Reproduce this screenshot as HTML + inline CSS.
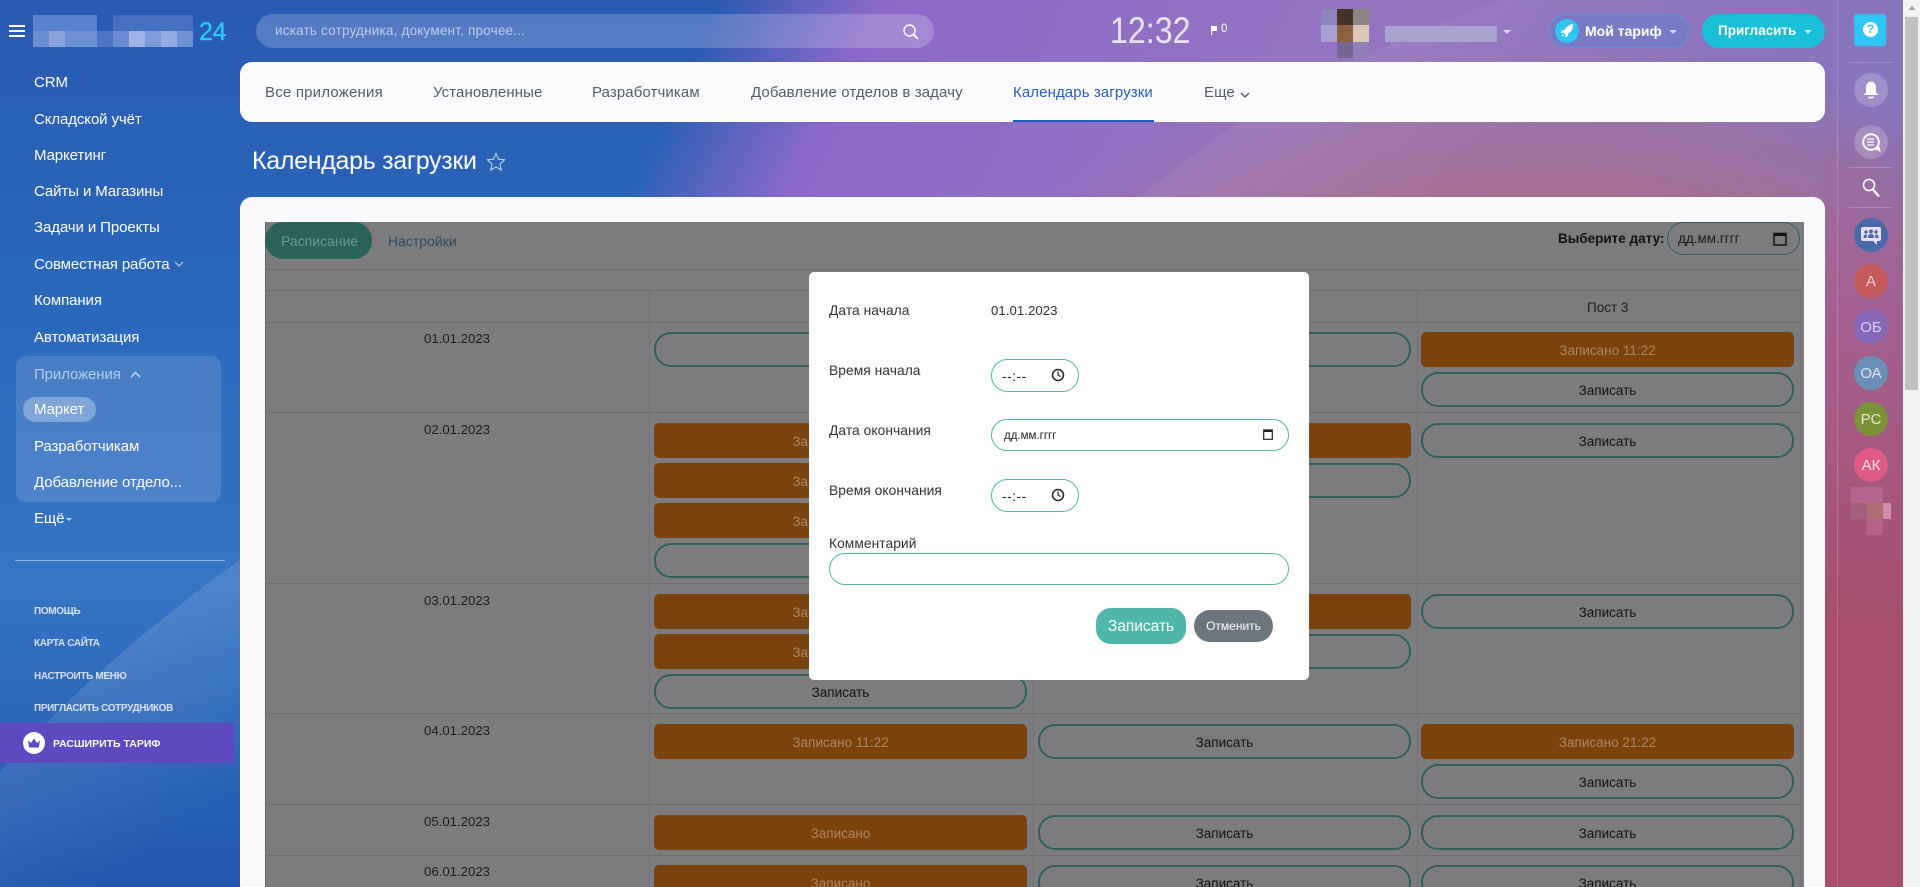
<!DOCTYPE html>
<html lang="ru"><head><meta charset="utf-8"><title>Календарь загрузки</title>
<style>
*{box-sizing:border-box}
html,body{margin:0;padding:0;width:1920px;height:887px;overflow:hidden;font-family:"Liberation Sans","DejaVu Sans",sans-serif}
#root{position:relative;width:1920px;height:887px;overflow:hidden}
#bg{position:absolute;left:0;top:0;width:1903px;height:887px;
background:
radial-gradient(ellipse 620px 360px at 1560px 400px,rgba(172,110,136,1) 45%,rgba(172,110,136,0) 100%),
linear-gradient(115deg,rgba(140,105,200,0) 31%,rgba(140,105,200,1) 38%,rgba(150,118,190,1) 62%,rgba(122,116,186,1) 100%),
linear-gradient(180deg,#2a5ab3 0,#2a66ba 30%,#3774c4 66%,#2b64b8 84%,#2357ad 100%)}
#rail{position:absolute;left:1825px;top:0;width:78px;height:887px;background:linear-gradient(180deg,rgba(166,78,108,0) 120px,rgba(160,92,150,.75) 300px,rgba(166,78,108,1) 620px)}
.a,.t,.o,.b,.c{position:absolute}
.t{white-space:nowrap;height:20px;line-height:20px}
.s{color:#fff;font-size:15px;left:34px;letter-spacing:-.1px}
.sm{color:rgba(255,255,255,.78);font-size:10px;font-weight:bold;left:34px;letter-spacing:-.35px}
.tab{color:#535c69;font-size:15px;top:83px;letter-spacing:.1px}
.o{background:#7a430e;border-radius:5px;color:#ab8868;height:35px;width:373px;font-size:13.5px;text-align:center;line-height:37.5px}
.b{border:2px solid #2f5f57;border-radius:17px;color:#111;height:35px;width:373px;font-size:13.5px;text-align:center;line-height:34px}
.x1{left:654px}.x2{left:1038px}.x3{left:1421px}
.hl{position:absolute;left:265px;width:1535px;height:1px;background:#6c6e70}
.vl{position:absolute;top:290px;width:1px;height:597px;background:#6f7174}
.d{color:#1c1d1f;font-size:13.2px;left:424px;width:66px;text-align:center}
.c{border-radius:50%;width:34px;height:34px;left:1854px;color:#fff;font-size:15px;text-align:center;line-height:36px}
.dv{position:absolute;left:1849px;width:43px;height:1px;background:rgba(255,255,255,.2)}
.f{border:1px solid #55b5a8;border-radius:17px;position:absolute;background:#fff}
.l{color:#333;font-size:13.8px;left:829px;letter-spacing:.05px}
.car{position:absolute;width:0;height:0;border-left:4px solid transparent;border-right:4px solid transparent;border-top:4px solid rgba(255,255,255,.7)}
</style></head><body>
<div id="root">
<div id="bg"></div>
<div id="rail"></div>
<svg class="a" style="left:0;top:0" width="1903" height="887">
<defs>
<linearGradient id="g1" gradientUnits="userSpaceOnUse" x1="130" y1="650" x2="230" y2="800"><stop offset="0" stop-color="#fff" stop-opacity=".11"/><stop offset="1" stop-color="#fff" stop-opacity="0"/></linearGradient>
<linearGradient id="g2" gradientUnits="userSpaceOnUse" x1="1280" y1="90" x2="1420" y2="220"><stop offset="0" stop-color="#fff" stop-opacity=".06"/><stop offset="1" stop-color="#fff" stop-opacity="0"/></linearGradient>
</defs>
<path d="M0 772 Q100 660 240 560 L240 887 L0 887Z" fill="url(#g1)"/>
<path d="M1140 197 Q1190 155 1240 122 Q1340 60 1500 0 L1903 0 L1903 197Z" fill="url(#g2)"/>
</svg>

<!-- header -->
<div class="a" style="left:9px;top:25px;width:16px;height:2px;background:#fff"></div>
<div class="a" style="left:9px;top:30px;width:16px;height:2px;background:#fff"></div>
<div class="a" style="left:9px;top:35px;width:16px;height:2px;background:#fff"></div>
<div class="a" style="left:33px;top:15px;width:64px;height:16px;background:#5a82cc"></div>
<div class="a" style="left:113px;top:15px;width:80px;height:16px;background:#4570c2"></div>
<div class="a" style="left:33px;top:31px;width:160px;height:16px;background:linear-gradient(90deg,#6a8fd2 0 10%,#8aa3da 10% 20%,#6e90d4 20% 40%,#4a75c4 40% 50%,#6a8cd2 50% 60%,#9fb4e2 60% 70%,#7d9bd8 70% 80%,#93abe0 80% 90%,#6f92d4 90%)"></div>
<div class="t" style="left:199px;top:17px;height:30px;line-height:30px;font-size:25px;color:#2fc6f6;letter-spacing:-.3px;-webkit-text-stroke:.4px #2fc6f6">24</div>
<div class="a" style="left:256px;top:14px;width:678px;height:34px;border-radius:17px;background:rgba(255,255,255,.2)"></div>
<div class="t" style="left:275px;top:21px;font-size:13.5px;letter-spacing:.2px;color:rgba(255,255,255,.62)">искать сотрудника, документ, прочее...</div>
<svg class="a" style="left:902px;top:23px" width="18" height="18" viewBox="0 0 18 18" fill="none" stroke="#fff" stroke-width="1.4"><circle cx="7.5" cy="7.5" r="5.5"/><path d="M11.5 11.5L16 16" stroke-width="2"/></svg>
<div class="t" style="left:1110px;top:10px;height:42px;line-height:42px;font-size:37px;color:rgba(255,255,255,.8);transform:scaleX(.87);transform-origin:0 0">12:32</div>
<svg class="a" style="left:1210px;top:25px" width="9" height="10"><path d="M1 1h6v5H2.2v4H1z" fill="#fff"/></svg>
<div class="t" style="left:1221px;top:19px;font-size:11.5px;color:#fff">0</div>
<div class="a" style="left:1321px;top:9px;width:16px;height:16px;background:#8f84bd"></div>
<div class="a" style="left:1337px;top:9px;width:16px;height:16px;background:#46322a"></div>
<div class="a" style="left:1353px;top:9px;width:16px;height:16px;background:#8e8484"></div>
<div class="a" style="left:1321px;top:25px;width:16px;height:17px;background:#aba0d2"></div>
<div class="a" style="left:1337px;top:25px;width:16px;height:17px;background:#8e5f42"></div>
<div class="a" style="left:1353px;top:25px;width:16px;height:17px;background:#dcc8b8"></div>
<div class="a" style="left:1337px;top:42px;width:16px;height:16px;background:#766493"></div>
<div class="a" style="left:1353px;top:42px;width:16px;height:16px;background:#8f7fb3"></div>
<div class="a" style="left:1385px;top:26px;width:112px;height:16px;background:#a9a3d0"></div>
<div class="car" style="left:1503px;top:30px"></div>
<div class="a" style="left:1549px;top:14px;width:140px;height:34px;border-radius:17px;border:1px solid #5b97d6;background:rgba(70,130,210,.32)"></div>
<div class="a" style="left:1555px;top:19px;width:24px;height:24px;border-radius:50%;background:#2fc6f6"></div>
<svg class="a" style="left:1559px;top:23px" width="16" height="16" viewBox="0 0 16 16"><path d="M14 1C10 1.500 7 4 5.500 7L3 7.500 1.500 10 4.500 9.800 6.500 11.800 6.200 14.500 8.800 13 9.200 10.500C12 9 14.500 6 14 1ZM3.800 11 5.200 12.300 2.500 13.800Z" fill="#fff"/></svg>
<div class="t" style="left:1585px;top:21px;font-size:14px;font-weight:bold;color:#fff">Мой тариф</div>
<div class="car" style="left:1669px;top:30px"></div>
<div class="a" style="left:1702px;top:14px;width:123px;height:34px;border-radius:17px;background:#1bbfd8"></div>
<div class="t" style="left:1718px;top:21px;font-size:13.5px;font-weight:bold;color:#fff">Пригласить</div>
<div class="car" style="left:1804px;top:30px"></div>

<!-- right rail -->
<div class="a" style="left:1837px;top:0;width:1px;height:887px;background:rgba(255,255,255,.18)"></div>
<div class="a" style="left:1854px;top:14px;width:32px;height:32px;border-radius:3px;background:#2fc6f6"></div>
<div class="a" style="left:1863px;top:22px;width:15px;height:15px;border-radius:50%;background:#fff;color:#2fc6f6;font-weight:bold;font-size:12px;line-height:15px;text-align:center">?</div>
<div class="dv" style="top:62px"></div>
<div class="c" style="top:73px;background:rgba(255,255,255,.2)"></div>
<svg class="a" style="left:1861px;top:80px" width="20" height="20" viewBox="0 0 18 18"><path d="M9 1.500C6 1.500 4.500 4 4.500 7V11L2.500 13.500H15.500L13.500 11V7C13.500 4 12 1.500 9 1.500Z" fill="#fff"/><rect x="6.500" y="15" width="5" height="1.500" fill="#fff"/></svg>
<div class="c" style="top:125px;background:rgba(255,255,255,.2)"></div>
<svg class="a" style="left:1861px;top:132px" width="21" height="21" viewBox="0 0 21 21" fill="none" stroke="#fff"><circle cx="10" cy="10" r="7.800" stroke-width="2"/><path d="M6 7h7M6 10h7M6 13h7" stroke-width="1.200"/><path d="M15 17l4 2-1-4z" fill="#fff"/></svg>
<div class="dv" style="top:167px"></div>
<svg class="a" style="left:1861px;top:177px" width="20" height="22" viewBox="0 0 20 22" fill="none" stroke="#fff"><circle cx="8" cy="8" r="5.500" stroke-width="1.600"/><path d="M12 12.500L18 19.500" stroke-width="2.200"/></svg>
<div class="dv" style="top:207px"></div>
<div class="c" style="top:218px;background:#4a67a8"></div>
<svg class="a" style="left:1860px;top:226px" width="22" height="20" viewBox="0 0 22 20"><path d="M3 1h16a2 2 0 0 1 2 2v10a2 2 0 0 1-2 2h-2v4l-4-4H3a2 2 0 0 1-2-2V3a2 2 0 0 1 2-2Z" fill="#e4e0f2"/><g fill="#4a67a8"><circle cx="11" cy="5.500" r="2"/><circle cx="6" cy="6" r="1.700"/><circle cx="16" cy="6" r="1.700"/><path d="M8 12c0-3 1-4 3-4s3 1 3 4zM3.500 12c0-2.500.8-3.500 2.500-3.500l1 .5-.5 3zM18.500 12c0-2.500-.8-3.500-2.500-3.500l-1 .5.500 3z"/></g></svg>
<div class="c" style="top:264px;background:#c45a5a;color:#f0d0d0">А</div>
<div class="c" style="top:310px;background:#8767b8;color:#ddd0ee">ОБ</div>
<div class="c" style="top:356px;background:#6a90b8;color:#dbe6f0">ОА</div>
<div class="c" style="top:402px;background:#7d9238;color:#e4ecc8">РС</div>
<div class="c" style="top:448px;background:#df5a86;color:#fbe0ea">АК</div>
<div class="a" style="left:1851px;top:487px;width:32px;height:16px;background:#b5668e"></div>
<div class="a" style="left:1851px;top:503px;width:16px;height:16px;background:#a0607e"></div>
<div class="a" style="left:1867px;top:503px;width:16px;height:16px;background:#b06e76"></div>
<div class="a" style="left:1883px;top:503px;width:8px;height:16px;background:#d08fb0"></div>
<div class="a" style="left:1867px;top:519px;width:16px;height:16px;background:#b5628a"></div>
<!-- scrollbar -->
<div class="a" style="left:1903px;top:0;width:17px;height:887px;background:#f1f1f1"></div>
<div class="a" style="left:1905px;top:17px;width:13px;height:373px;background:#c1c1c1"></div>
<div class="a" style="left:1908px;top:6px;width:0;height:0;border-left:4px solid transparent;border-right:4px solid transparent;border-bottom:4px solid #a3a3a3"></div>

<!-- sidebar -->
<div class="a" style="left:16px;top:356px;width:205px;height:146px;border-radius:10px;background:rgba(255,255,255,.13)"></div>
<div class="a" style="left:23px;top:397px;width:73px;height:25px;border-radius:13px;background:rgba(255,255,255,.3)"></div>
<div class="t s" style="top:73px">CRM</div>
<div class="t s" style="top:110px">Складской учёт</div>
<div class="t s" style="top:146px">Маркетинг</div>
<div class="t s" style="top:182px">Сайты и Магазины</div>
<div class="t s" style="top:218px">Задачи и Проекты</div>
<div class="t s" style="top:255px">Совместная работа</div>
<svg class="a" style="left:174px;top:261px" width="10" height="7" fill="none" stroke="rgba(255,255,255,.6)" stroke-width="1.300"><path d="M1 1l4 4 4-4"/></svg>
<div class="t s" style="top:291px">Компания</div>
<div class="t s" style="top:328px">Автоматизация</div>
<div class="t s" style="top:365px;color:rgba(255,255,255,.6)">Приложения</div>
<svg class="a" style="left:130px;top:371px" width="11" height="8" fill="none" stroke="rgba(255,255,255,.75)" stroke-width="1.400"><path d="M1 6l4.500-4.500L10 6"/></svg>
<div class="t s" style="top:400px">Маркет</div>
<div class="t s" style="top:437px">Разработчикам</div>
<div class="t s" style="top:473px">Добавление отдело...</div>
<div class="t s" style="top:509px">Ещё</div>
<div class="car" style="left:66px;top:518px;border-left-width:3px;border-right-width:3px;border-top-width:3px"></div>
<div class="a" style="left:15px;top:560px;width:210px;height:1px;background:rgba(255,255,255,.45)"></div>
<div class="t sm" style="top:602px">ПОМОЩЬ</div>
<div class="t sm" style="top:634px">КАРТА САЙТА</div>
<div class="t sm" style="top:667px">НАСТРОИТЬ МЕНЮ</div>
<div class="t sm" style="top:699px">ПРИГЛАСИТЬ СОТРУДНИКОВ</div>
<div class="a" style="left:0;top:723px;width:234px;height:40px;background:#5d49c0"></div>
<div class="a" style="left:23px;top:732px;width:22px;height:22px;border-radius:50%;background:#fff"></div>
<svg class="a" style="left:26px;top:736px" width="16" height="14" viewBox="0 0 16 14"><path d="M2 4.500L5 7 8 2.500 11 7 14 4.500 12.800 11.500H3.200Z" fill="#5d49c0"/></svg>
<div class="t" style="left:53px;top:734px;font-size:10.500px;font-weight:bold;color:#fff">РАСШИРИТЬ ТАРИФ</div>

<!-- tabs -->
<div class="a" style="left:240px;top:62px;width:1585px;height:60px;border-radius:12px;background:#fbfbfd"></div>
<div class="t tab" style="left:265px;letter-spacing:.2px">Все приложения</div>
<div class="t tab" style="left:433px">Установленные</div>
<div class="t tab" style="left:592px">Разработчикам</div>
<div class="t tab" style="left:751px">Добавление отделов в задачу</div>
<div class="t tab" style="left:1013px;color:#2a5cbf">Календарь загрузки</div>
<div class="a" style="left:1013px;top:120px;width:141px;height:2px;background:#1f5cc4"></div>
<div class="t tab" style="left:1204px">Еще</div>
<svg class="a" style="left:1240px;top:91px" width="10" height="8" fill="none" stroke="#535c69" stroke-width="1.500"><path d="M1 2l4 4 4-4"/></svg>

<div class="t" style="left:252px;top:146px;height:30px;line-height:30px;font-size:25px;color:#fff;letter-spacing:-.3px">Календарь загрузки</div>
<svg class="a" style="left:486px;top:152px" width="20" height="20" viewBox="0 0 20 20" fill="none" stroke="rgba(255,255,255,.7)" stroke-width="1.100"><path d="M10 1.500l2.500 5.700 6.200.6-4.700 4.100 1.400 6.100L10 14.900l-5.400 3.100L6 11.900 1.300 7.800l6.200-.6z"/></svg>

<!-- content panel -->
<div class="a" style="left:240px;top:197px;width:1585px;height:700px;border-radius:12px;background:#fafafd"></div>
<div class="a" style="left:265px;top:222px;width:1539px;height:665px;background:#7c7c7f;border-left:1px solid #626366"></div>
<div class="a" style="left:265px;top:222px;width:107px;height:37px;border-radius:18px;background:#296358"></div>
<div class="t" style="left:281px;top:231px;font-size:14px;color:#6f9a93">Расписание</div>
<div class="t" style="left:388px;top:231px;font-size:14px;color:#2c4a5f">Настройки</div>
<div class="t" style="left:1558px;top:229px;font-size:13.500px;font-weight:bold;color:#111">Выберите дату:</div>
<div class="a" style="left:1667px;top:222px;width:133px;height:33px;border:1px solid #2f5f58;border-radius:17px"></div>
<div class="t" style="left:1678px;top:229px;font-size:13.500px;color:#1a1a1a">дд.мм.гггг</div>
<svg class="a" style="left:1773px;top:231px" width="14" height="15" viewBox="0 0 14 15"><path d="M1 2.500h12v11.500H1z" fill="none" stroke="#111" stroke-width="1.500"/><rect x="1" y="2" width="12" height="3" fill="#111"/></svg>

<div class="hl" style="top:269px"></div>
<div class="hl" style="top:290px"></div>
<div class="hl" style="top:322px"></div>
<div class="hl" style="top:412px"></div>
<div class="hl" style="top:583px"></div>
<div class="hl" style="top:713px"></div>
<div class="hl" style="top:804px"></div>
<div class="hl" style="top:855px"></div>
<div class="vl" style="left:649px"></div>
<div class="vl" style="left:1033px"></div>
<div class="vl" style="left:1417px"></div>
<div class="vl" style="left:1800px"></div>
<div class="t" style="left:1587px;top:298px;font-size:13.500px;color:#1c1d1f">Пост 3</div>

<div class="t d" style="top:329px">01.01.2023</div>
<div class="t d" style="top:420px">02.01.2023</div>
<div class="t d" style="top:591px">03.01.2023</div>
<div class="t d" style="top:721px">04.01.2023</div>
<div class="t d" style="top:812px">05.01.2023</div>
<div class="t d" style="top:862px">06.01.2023</div>

<div class="b x1" style="top:332px">Записать</div>
<div class="b x2" style="top:332px">Записать</div>
<div class="o x3" style="top:332px">Записано 11:22</div>
<div class="b x3" style="top:372px">Записать</div>

<div class="o x1" style="top:423px">Записано 11:22</div>
<div class="o x1" style="top:463px">Записано 11:22</div>
<div class="o x1" style="top:503px">Записано 11:22</div>
<div class="b x1" style="top:543px">Записать</div>
<div class="o x2" style="top:423px">Записано</div>
<div class="b x2" style="top:463px">Записать</div>
<div class="b x3" style="top:423px">Записать</div>

<div class="o x1" style="top:594px">Записано 11:22</div>
<div class="o x1" style="top:634px">Записано 11:22</div>
<div class="b x1" style="top:674px">Записать</div>
<div class="o x2" style="top:594px">Записано</div>
<div class="b x2" style="top:634px">Записать</div>
<div class="b x3" style="top:594px">Записать</div>

<div class="o x1" style="top:724px">Записано 11:22</div>
<div class="b x2" style="top:724px">Записать</div>
<div class="o x3" style="top:724px">Записано 21:22</div>
<div class="b x3" style="top:764px">Записать</div>

<div class="o x1" style="top:815px">Записано</div>
<div class="b x2" style="top:815px">Записать</div>
<div class="b x3" style="top:815px">Записать</div>

<div class="o x1" style="top:865px">Записано</div>
<div class="b x2" style="top:865px">Записать</div>
<div class="b x3" style="top:865px">Записать</div>

<!-- modal -->
<div class="a" style="left:809px;top:272px;width:500px;height:408px;border-radius:5px;background:#fdfdfe"></div>
<div class="t l" style="top:301px">Дата начала</div>
<div class="t l" style="left:991px;top:301px;font-size:13.200px">01.01.2023</div>
<div class="t l" style="top:361px">Время начала</div>
<div class="f" style="left:991px;top:359px;width:88px;height:33px"></div>
<div class="t" style="left:1002px;top:367px;font-size:13.500px;color:#222;letter-spacing:.6px">--:--</div>
<svg class="a" style="left:1051px;top:368px" width="14" height="14" viewBox="0 0 14 14" fill="none" stroke="#222" stroke-width="1.500"><circle cx="7" cy="7" r="5.500"/><path d="M7 3.500V7l2.500 1.500" stroke-width="1.200"/></svg>
<div class="t l" style="top:421px">Дата окончания</div>
<div class="f" style="left:991px;top:419px;width:298px;height:32px"></div>
<div class="t" style="left:1004px;top:426px;font-size:11.500px;color:#222">дд.мм.гггг</div>
<svg class="a" style="left:1263px;top:428px" width="10" height="12" viewBox="0 0 10 12"><path d="M.7 2h8.600v9.300H.7z" fill="none" stroke="#222" stroke-width="1.200"/><rect x=".5" y="1.500" width="9" height="2.500" fill="#222"/></svg>
<div class="t l" style="top:481px">Время окончания</div>
<div class="f" style="left:991px;top:479px;width:88px;height:33px"></div>
<div class="t" style="left:1002px;top:487px;font-size:13.500px;color:#222;letter-spacing:.6px">--:--</div>
<svg class="a" style="left:1051px;top:488px" width="14" height="14" viewBox="0 0 14 14" fill="none" stroke="#222" stroke-width="1.500"><circle cx="7" cy="7" r="5.500"/><path d="M7 3.500V7l2.500 1.500" stroke-width="1.200"/></svg>
<div class="t l" style="top:534px">Комментарий</div>
<div class="f" style="left:829px;top:553px;width:460px;height:32px"></div>
<div class="a" style="left:1096px;top:608px;width:90px;height:36px;border-radius:15px;background:#4fb6a9;color:#fff;font-size:15.500px;text-align:center;line-height:38px">Записать</div>
<div class="a" style="left:1194px;top:610px;width:79px;height:32px;border-radius:16px;background:#6c757d;color:#fff;font-size:12px;text-align:center;line-height:33px">Отменить</div>
</div>
</body></html>
